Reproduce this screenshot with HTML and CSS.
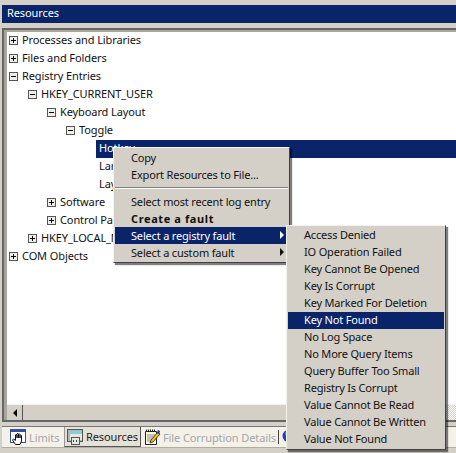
FILE: index.html
```html
<!DOCTYPE html>
<html lang="en">
<head>
    <meta charset="UTF-8">
    <title>Resources</title>
    <link rel="stylesheet" href="styles.css">
</head>
<body>
    <div class="title-bar">Resources</div>
    <div class="tree-panel">
        <div class="tree">
            <div class="node"><span class="box plus"></span>Processes and Libraries</div>
            <div class="node"><span class="box plus"></span>Files and Folders</div>
            <div class="node"><span class="box"></span>Registry Entries</div>
            <div class="node lvl1"><span class="box"></span>HKEY_CURRENT_USER</div>
            <div class="node lvl2"><span class="box"></span>Keyboard Layout</div>
            <div class="node lvl3"><span class="box"></span>Toggle</div>
            <div class="node lvl4 selected"><span class="label">Hotkey</span></div>
            <div class="node lvl4"><span class="label">Language Hotkey</span></div>
            <div class="node lvl4"><span class="label">Layout Hotkey</span></div>
            <div class="node lvl2"><span class="box plus"></span>Software</div>
            <div class="node lvl2"><span class="box plus"></span>Control Panel</div>
            <div class="node lvl1"><span class="box plus"></span>HKEY_LOCAL_MACHINE</div>
            <div class="node"><span class="box plus"></span>COM Objects</div>
        </div>
        <div class="scrollbar">
            <div class="scroll-btn"><span class="arrow-left"></span></div>
            <div class="scroll-thumb"></div>
            <div class="scroll-track"></div>
        </div>
    </div>
    <div class="tabs">
        <div class="tab tab-limits dim">
            <svg width="16" height="16" viewBox="0 0 16 16"><rect x="0.5" y="0.5" width="15" height="13" fill="#fff" stroke="#34509c"/><rect x="1" y="1" width="14" height="2" fill="#34509c"/><path d="M5.500 15.500L2.500 11l1-1 2 1.500V6a.8.8 0 0 1 1.500 0v3-4a.8.8 0 0 1 1.500 0v4-3.500a.8.8 0 0 1 1.500 0V9V6.500a.8.8 0 0 1 1.500 0V12l-1.500 3.500z" fill="#fff" stroke="#111" stroke-width="1"/></svg>
            <span>Limits</span>
        </div>
        <div class="tab tab-active">
            <svg width="16" height="16" viewBox="0 0 16 16"><rect x="0.500" y="0.500" width="15" height="12" fill="#b9b6ae" stroke="#555"/><rect x="3" y="2" width="12" height="3" fill="#7fd0e0"/><rect x="3" y="5" width="12" height="6" fill="#e8e6e0"/><rect x="4.500" y="8.500" width="8" height="7" fill="#e8e6e0" stroke="#555"/><path d="M6 12h1M9 12h1" stroke="#444" stroke-width="2"/></svg>
            <span>Resources</span>
        </div>
        <div class="tab tab-files dim">
            <svg width="17" height="16" viewBox="0 0 17 16"><path d="M1.500 2.500h11v13h-11z" fill="#fffde0" stroke="#222"/><path d="M2 1.500h10" stroke="#222" stroke-dasharray="1 1" stroke-width="2"/><path d="M3 6h8M3 8h8M3 10h5M3 12h4" stroke="#888"/><path d="M6 14l1-3 7-8 2 2-7 8z" fill="#f0c020" stroke="#222" stroke-width="0.800"/><path d="M13 4l1-3 2 1-1 3z" fill="#1c2fb0"/></svg>
            <span>File Corruption Details</span>
        </div>
        <div class="tab-sep"></div>
        <svg class="globe" width="8" height="16" viewBox="0 0 8 16"><circle cx="7" cy="7" r="6.500" fill="#1f3fc0"/><path d="M3 3l3-2 2 1v4L5 8 3 6z" fill="#2f9a3a"/></svg>
    </div>

    <div class="menu context-menu">
        <div class="item">Copy</div>
        <div class="item">Export Resources to File...</div>
        <div class="divider"></div>
        <div class="item">Select most recent log entry</div>
        <div class="item bold">Create a fault</div>
        <div class="item selected sub">Select a registry fault</div>
        <div class="item sub">Select a custom fault</div>
    </div>

    <div class="menu fault-menu">
        <div class="item">Access Denied</div>
        <div class="item">IO Operation Failed</div>
        <div class="item">Key Cannot Be Opened</div>
        <div class="item">Key Is Corrupt</div>
        <div class="item">Key Marked For Deletion</div>
        <div class="item selected">Key Not Found</div>
        <div class="item">No Log Space</div>
        <div class="item">No More Query Items</div>
        <div class="item">Query Buffer Too Small</div>
        <div class="item">Registry Is Corrupt</div>
        <div class="item">Value Cannot Be Read</div>
        <div class="item">Value Cannot Be Written</div>
        <div class="item">Value Not Found</div>
    </div>
</body>
</html>
```

FILE: styles.css
```css
:root {
    --face: #d4d0c8;
    --navy: #0a246a;
    --text: #111;
}

html, body {
    margin: 0;
    padding: 0;
    height: 453px;
    overflow: hidden;
}

body {
    background: var(--face);
    color: var(--text);
    font-family: "Noto Sans", sans-serif;
    font-size: 11px;
    letter-spacing: -0.1px;
    position: relative;
    display: flex;
    flex-direction: column;
    box-sizing: border-box;
    padding: 5px 0 0 2px;
}

.title-bar {
    height: 18px;
    line-height: 16px;
    background: var(--navy);
    color: #fff;
    padding-left: 5px;
    flex: none;
}

/* sunken frame round the tree */
.tree-panel {
    margin-top: 5px;
    height: 394px;
    flex: none;
    border: 2px solid #666;
    border-right: none;
    background: #a8a59e;
    display: flex;
    flex-direction: column;
    box-sizing: border-box;
    padding: 2px 0 0 3px;
}

.tree {
    flex: 1;
    background: #fff;
}

.node {
    height: 18px;
    line-height: 16px;
    display: flex;
    align-items: center;
    padding: 0 0 2px 2px;
    box-sizing: border-box;
    white-space: nowrap;
}

.lvl1 { padding-left: 21px; }
.lvl2 { padding-left: 40px; }
.lvl3 { padding-left: 59px; }

.lvl4 {
    padding-left: 0;
    margin-left: 89px;
}

.node.selected {
    background: var(--navy);
    color: #fff;
}

.label {
    padding-left: 3px;
}

.box {
    width: 7px;
    height: 7px;
    border: 1px solid #555;
    margin-right: 4px;
    flex: none;
    background: linear-gradient(#000, #000) center / 5px 1px no-repeat, #eeeeea;
}

.box.plus {
    background: linear-gradient(#000, #000) center / 5px 1px no-repeat, linear-gradient(#000, #000) center / 1px 5px no-repeat, #eeeeea;
}

.scrollbar {
    height: 16px;
    flex: none;
    background: var(--face);
    border-top: 1px solid #f4f2ec;
    box-sizing: border-box;
    display: flex;
}

.scroll-btn {
    width: 15px;
    border-right: 1px solid #555;
    display: flex;
    align-items: center;
    justify-content: center;
}

.arrow-left {
    border: 4px solid transparent;
    border-left: none;
    border-right: 4px solid #000;
}

.scroll-thumb {
    flex: 1;
}

.scroll-track {
    width: 20px;
    background: repeating-conic-gradient(#fff 0 25%, var(--face) 0 50%) 0 0 / 2px 2px;
}

.tabs {
    margin-top: 4px;
    height: 20px;
    flex: none;
    background: #f4f1e8;
    border-top: 1px solid #777;
    border-bottom: 1px solid #b0ada5;
    display: flex;
    align-items: center;
    overflow: hidden;
}

.tab {
    height: 20px;
    display: flex;
    align-items: center;
    gap: 3px;
    box-sizing: border-box;
    white-space: nowrap;
    flex: none;
}

.tab.dim span {
    color: #a4a6ac;
}

.tab-limits {
    width: 62px;
    padding-left: 8px;
}

.tab-active {
    width: 77px;
    background: #e4e1d8;
    border-right: 1px solid #555;
    border-bottom: 1px solid #555;
    border-left: 1px solid #999;
    padding-left: 2px;
    color: #222;
}

.tab-files {
    padding-left: 3px;
    padding-right: 2px;
    gap: 2px;
}

.tab-sep {
    width: 1px;
    height: 14px;
    background: #444;
    margin-right: 3px;
    flex: none;
}

.menu {
    position: absolute;
    background: var(--face);
    border: 1px solid;
    border-color: #f4f2ec #404040 #404040 #f4f2ec;
    box-shadow: 2px 2px 1px rgba(0, 0, 0, 0.5);
    padding: 1px;
    box-sizing: border-box;
    letter-spacing: -0.18px;
}

.context-menu {
    left: 113px;
    top: 147px;
    width: 177px;
}

.fault-menu {
    left: 286px;
    top: 225px;
    width: 160px;
}

.menu .item {
    height: 17px;
    line-height: 17px;
    padding-left: 16px;
    white-space: nowrap;
    position: relative;
}

.fault-menu .item {
    line-height: 16px;
}

.menu .item.bold {
    font-weight: 700;
    letter-spacing: 0.6px;
}

.menu .item.selected {
    background: var(--navy);
    color: #fff;
}

.menu .item.sub::after {
    content: "";
    position: absolute;
    right: 4px;
    top: 4px;
    border: 4px solid transparent;
    border-right: none;
    border-left: 4px solid currentColor;
}

.divider {
    height: 2px;
    margin: 4px 0;
    background: linear-gradient(#808080 50%, #fff 50%);
}
```
